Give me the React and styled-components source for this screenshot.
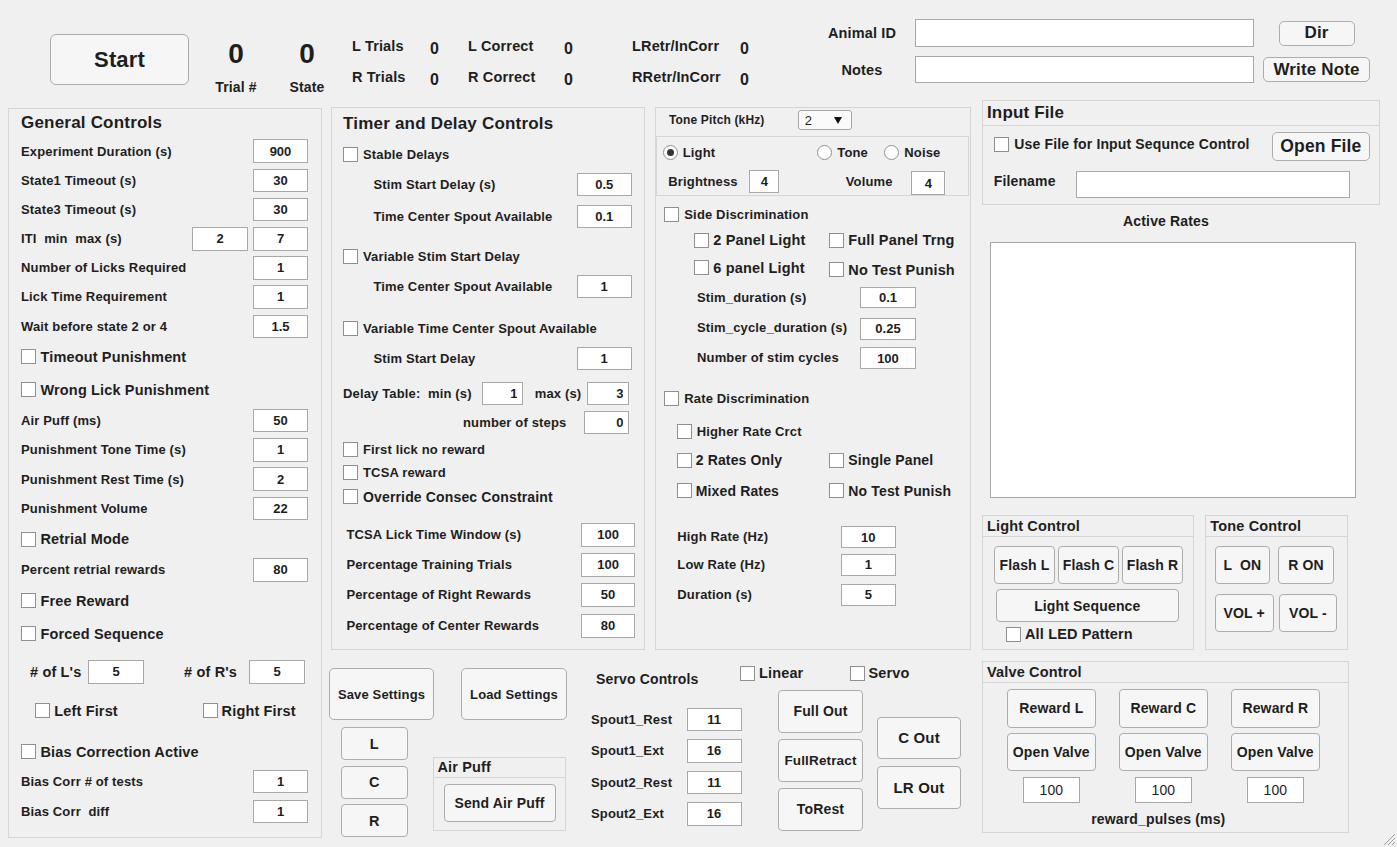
import React from 'react';
import styled, { createGlobalStyle } from 'styled-components';

const px = v => (typeof v === 'number' ? `${v}px` : v);

const GlobalStyle = createGlobalStyle`
  html, body { margin: 0; padding: 0; background: #f0f0f0; }
  body { font-family: "Liberation Sans", Arial, sans-serif; color: #1e1e1e; }
  * { box-sizing: border-box; }
`;

const Window = styled.div`
  position: relative;
  width: 1397px;
  height: 847px;
  overflow: hidden;
  background: #f0f0f0;
  font-weight: bold;
  letter-spacing: 0.15px;
`;

/* ---------- shared widgets ---------- */

const Btn = styled.button`
  flex: none;
  width: ${p => px(p.$w)};
  height: ${p => px(p.$h)};
  margin: ${p => px(p.$mt ?? 0)} 0 0 ${p => px(p.$ml ?? 0)};
  padding: 0;
  background: #f6f6f6;
  border: 1px solid #adadad;
  border-radius: ${p => px(p.$r ?? 4)};
  font-family: inherit;
  font-weight: bold;
  font-size: ${p => px(p.$fs ?? 14)};
  letter-spacing: 0.15px;
  color: #1e1e1e;
  white-space: pre;
  cursor: pointer;
`;

const Field = styled.input.attrs({ readOnly: true, type: 'text' })`
  flex: none;
  width: ${p => px(p.$w ?? 55)};
  height: ${p => px(p.$h ?? 23.5)};
  margin: ${p => px(p.$mt ?? 0)} ${p => px(p.$mr ?? 0)} 0 ${p => px(p.$ml ?? 0)};
  padding: 0 ${p => (p.$right ? '5px' : '0')};
  border: 1px solid #a8a8a8;
  background: #fff;
  font-family: inherit;
  font-weight: ${p => (p.$thin ? 'normal' : 'bold')};
  font-size: ${p => px(p.$fs ?? 13)};
  text-align: ${p => (p.$right ? 'right' : 'center')};
  color: #1e1e1e;
  outline: none;
`;

/* a line of a form: 20px tall, its distance to the line above set by $mt */
const Row = styled.div`
  display: flex;
  align-items: center;
  flex: none;
  height: ${p => px(p.$h ?? 20)};
  margin-top: ${p => px(p.$mt ?? 0)};
  padding-left: ${p => px(p.$pl ?? 0)};
  font-size: ${p => px(p.$fs ?? 13)};
`;

const Text = styled.span`
  flex: none;
  width: ${p => (p.$w ? px(p.$w) : 'auto')};
  margin-left: ${p => px(p.$ml ?? 0)};
  padding-bottom: ${p => px(p.$pb ?? 0)};
  font-size: ${p => (p.$fs ? px(p.$fs) : 'inherit')};
  white-space: pre;
`;

const CheckItem = styled.span`
  display: inline-flex;
  align-items: center;
  flex: none;
  width: ${p => (p.$w ? px(p.$w) : 'auto')};
  margin-top: ${p => px(p.$dy ?? 0)};
  font-size: ${p => (p.$fs ? px(p.$fs) : 'inherit')};
  white-space: pre;
`;

const Box = styled.span`
  flex: none;
  width: 15px;
  height: 15px;
  margin-right: ${p => px(p.$gap ?? 5)};
  border: 1px solid #8f8f8f;
  background: #fff;
`;

const RadioDot = styled.span`
  flex: none;
  width: 15px;
  height: 15px;
  margin-right: 5px;
  border-radius: 50%;
  border: 1px solid #8f8f8f;
  background: #fff;
  display: inline-flex;
  align-items: center;
  justify-content: center;
  &::after {
    content: '';
    width: 7px;
    height: 7px;
    border-radius: 50%;
    background: ${p => (p.$on ? '#333' : 'transparent')};
  }
`;

function Check({ label, fs, w, gap, dy }) {
  return (
    <CheckItem $fs={fs} $w={w} $dy={dy}>
      <Box $gap={gap} />
      {label}
    </CheckItem>
  );
}

function Radio({ label, on, w }) {
  return (
    <CheckItem $w={w}>
      <RadioDot $on={on} />
      {label}
    </CheckItem>
  );
}

const Panel = styled.div`
  flex: none;
  display: flex;
  flex-direction: column;
  width: ${p => px(p.$w)};
  height: ${p => px(p.$h)};
  margin: ${p => px(p.$mt ?? 0)} 0 0 ${p => px(p.$ml ?? 0)};
  padding: 0 ${p => px(p.$pr ?? 0)} 0 ${p => px(p.$pl ?? 0)};
  border: 1px solid #d5d5d5;
`;

const PanelHead = styled.div`
  flex: none;
  display: flex;
  align-items: center;
  height: ${p => px(p.$h)};
  padding-left: 4px;
  border-bottom: 1px solid #d5d5d5;
  font-size: ${p => px(p.$fs ?? 14.5)};
`;

const PanelTitle = styled.div`
  flex: none;
  display: flex;
  align-items: center;
  height: ${p => px(p.$h)};
  font-size: 17px;
  letter-spacing: 0.2px;
`;

/* ---------- top bar ---------- */

const TopBar = styled.div`
  display: flex;
  align-items: flex-start;
  height: 99px;
`;

const StartButton = styled(Btn)`
  margin: 34px 0 0 50px;
  width: 139px;
  height: 51px;
  border-radius: 6px;
  font-size: 22px;
`;

const Counter = styled.div`
  flex: none;
  width: 48px;
  margin: 39px 0 0 ${p => px(p.$ml)};
  display: flex;
  flex-direction: column;
  align-items: center;
`;

const BigNum = styled.div`
  font-size: 28px;
  line-height: 30px;
`;

const Caption = styled.div`
  margin-top: 10px;
  font-size: 14px;
  line-height: 16px;
`;

const Stats = styled.div`
  flex: none;
  display: grid;
  grid-template-columns: 78px 38px 96px 68px 108px 20px;
  grid-template-rows: 30px 30px;
  row-gap: 1px;
  align-items: center;
  margin: 32px 0 0 21px;
`;

const StatLabel = styled.div`
  font-size: 14.5px;
  padding-bottom: 2px;
`;

const StatValue = styled.div`
  font-size: 16px;
  padding-top: 4px;
`;

const IdForm = styled.div`
  flex: none;
  display: grid;
  grid-template-columns: 88px 339px 125px;
  grid-template-rows: 28px 27px;
  row-gap: 9px;
  align-items: center;
  justify-items: center;
  margin: 19px 0 0 67px;
  & > input { justify-self: start; }
`;

const IdLabel = styled.div`
  justify-self: start;
  width: 70px;
  text-align: center;
  font-size: 14.5px;
`;

/* ---------- main area ---------- */

const Main = styled.div`
  display: flex;
  align-items: flex-start;
`;

const CenterBlock = styled.div`
  flex: none;
  width: 640px;
  margin: 8px 0 0 9px;
`;

const PanelsRow = styled.div`
  display: flex;
  gap: 10px;
`;

const SubPanel = styled.div`
  flex: none;
  height: 60px;
  margin: 3.8px 1px 0 0;
  border: 1px solid #d5d5d5;
  display: flex;
  flex-direction: column;
`;

const RowList = styled.div`
  display: flex;
  flex-direction: column;
  padding-top: ${p => px(p.$pt ?? 0)};
`;

const SelectBox = styled.div`
  flex: none;
  width: 54px;
  height: 20px;
  display: flex;
  align-items: center;
  justify-content: space-between;
  padding: 0 9px 0 6px;
  border: 1px solid #a5a5a5;
  border-radius: 3px;
  background: #fafafa;
  font-size: 13px;
  font-weight: normal;
`;

const Caret = styled.span`
  width: 0;
  height: 0;
  border-left: 4px solid transparent;
  border-right: 4px solid transparent;
  border-top: 7px solid #111;
`;

/* bottom area */

const BottomArea = styled.div`
  display: flex;
  margin-left: -2px;
  height: 197px;
`;

const SettingsCol = styled.div`
  flex: none;
  margin-top: 18px;
`;

const SettingsTop = styled.div`
  display: flex;
  gap: 27px;
`;

const SettingsLower = styled.div`
  display: flex;
  align-items: flex-start;
  margin-top: 7px;
`;

const Stack = styled.div`
  flex: none;
  display: flex;
  flex-direction: column;
  gap: ${p => px(p.$gap)};
  margin: ${p => px(p.$mt ?? 0)} 0 0 ${p => px(p.$ml ?? 0)};
`;

const PanelBody = styled.div`
  display: flex;
  flex-wrap: wrap;
  align-items: flex-start;
  gap: ${p => px(p.$gap ?? 0)};
  padding: ${p => px(p.$pt ?? 0)} 0 0 ${p => px(p.$pl ?? 0)};
`;

const ServoSpouts = styled.div`
  flex: none;
  width: 149px;
  margin: 19.3px 0 0 24px;
`;

const ServoBlock = styled.div`
  flex: none;
  margin-top: 14px;
`;

const ServoButtons = styled.div`
  display: flex;
  align-items: flex-start;
  margin-top: 8px;
  padding-left: 38px;
`;

/* right column */

const RightColumn = styled.div`
  flex: none;
  width: 398px;
  margin: 1px 0 0 11px;
`;

const ActiveTitle = styled.div`
  width: 368px;
  height: 32.8px;
  display: flex;
  align-items: center;
  justify-content: center;
  font-size: 14px;
`;

const RateList = styled.div`
  width: 365.4px;
  height: 256.4px;
  margin: 4px 0 0 8.3px;
  border: 1px solid #a8a8a8;
  background: #fff;
`;

const ControlRow = styled.div`
  display: flex;
  gap: 11px;
  margin-top: 16.8px;
`;

const BtnRow = styled.div`
  display: flex;
  gap: ${p => px(p.$gap)};
  margin: ${p => px(p.$mt ?? 0)} 0 0 ${p => px(p.$ml ?? 0)};
`;

const ValveCols = styled.div`
  display: flex;
  gap: 22px;
  padding: 6.6px 0 0 23.3px;
`;

const ValveCol = styled.div`
  flex: none;
  width: 90px;
  display: flex;
  flex-direction: column;
  align-items: center;
`;

const ValveCaption = styled.div`
  margin-top: 6px;
  padding-right: 14px;
  height: 20px;
  line-height: 20px;
  text-align: center;
  font-size: 14px;
`;

const Grip = styled.svg`
  position: absolute;
  right: 1px;
  bottom: 1px;
`;

/* ---------- data ---------- */

const generalRows = [
  { mt: 4.5, label: 'Experiment Duration (s)', value: '900' },
  { mt: 9.5, label: 'State1 Timeout (s)', value: '30' },
  { mt: 8.8, label: 'State3 Timeout (s)', value: '30' },
  { mt: 9.5, label: 'ITI  min  max (s)', value: '7', extra: '2' },
  { mt: 9, label: 'Number of Licks Required', value: '1' },
  { mt: 9, label: 'Lick Time Requirement', value: '1' },
  { mt: 9.9, label: 'Wait before state 2 or 4', value: '1.5' },
  { mt: 10.3, check: 'Timeout Punishment' },
  { mt: 12.7, check: 'Wrong Lick Punishment' },
  { mt: 11, label: 'Air Puff (ms)', value: '50' },
  { mt: 9.1, label: 'Punishment Tone Time (s)', value: '1' },
  { mt: 9.4, label: 'Punishment Rest Time (s)', value: '2' },
  { mt: 9.1, label: 'Punishment Volume', value: '22' },
  { mt: 11, check: 'Retrial Mode' },
  { mt: 10.5, label: 'Percent retrial rewards', value: '80' },
  { mt: 11.2, check: 'Free Reward' },
  { mt: 13, check: 'Forced Sequence' },
];

const tailRows = [
  { mt: 21, check: 'Bias Correction Active' },
  { mt: 10.1, label: 'Bias Corr # of tests', value: '1' },
  { mt: 9.9, label: 'Bias Corr  diff', value: '1' },
];

function GeneralRow({ row }) {
  if (row.check) {
    return (
      <Row $mt={row.mt}>
        <Check label={row.check} fs={14.5} gap={4.5} />
      </Row>
    );
  }
  return (
    <Row $mt={row.mt}>
      <Text>{row.label}</Text>
      {row.extra ? (
        <>
          <Field $ml="auto" $w={55.6} value={row.extra} />
          <Field $ml={5} value={row.value} />
        </>
      ) : (
        <Field $ml="auto" value={row.value} />
      )}
    </Row>
  );
}

const spouts = [
  ['Spout1_Rest', '11'],
  ['Spout1_Ext', '16'],
  ['Spout2_Rest', '11'],
  ['Spout2_Ext', '16'],
];

const valves = ['L', 'C', 'R'];

export default function App() {
  return (
    <>
      <GlobalStyle />
      <Window>
        <TopBar>
          <StartButton>Start</StartButton>
          <Counter $ml={23}>
            <BigNum>0</BigNum>
            <Caption>Trial #</Caption>
          </Counter>
          <Counter $ml={23}>
            <BigNum>0</BigNum>
            <Caption>State</Caption>
          </Counter>
          <Stats>
            <StatLabel>L Trials</StatLabel>
            <StatValue>0</StatValue>
            <StatLabel>L Correct</StatLabel>
            <StatValue>0</StatValue>
            <StatLabel>LRetr/InCorr</StatLabel>
            <StatValue>0</StatValue>
            <StatLabel>R Trials</StatLabel>
            <StatValue>0</StatValue>
            <StatLabel>R Correct</StatLabel>
            <StatValue>0</StatValue>
            <StatLabel>RRetr/InCorr</StatLabel>
            <StatValue>0</StatValue>
          </Stats>
          <IdForm>
            <IdLabel>Animal ID</IdLabel>
            <Field $w={339} $h={28} value="" />
            <Btn $w={76} $h={25} $fs={17} $r={5}>Dir</Btn>
            <IdLabel>Notes</IdLabel>
            <Field $w={339} $h={27} value="" />
            <Btn $w={107} $h={25} $fs={17} $r={5}>Write Note</Btn>
          </IdForm>
        </TopBar>

        <Main>
          {/* General Controls */}
          <Panel $w={314} $h={730} $mt={9} $ml={8} $pl={12} $pr={13}>
            <PanelTitle $h={27.5}>General Controls</PanelTitle>
            {generalRows.map((r, i) => (
              <GeneralRow key={i} row={r} />
            ))}
            <Row $mt={18} $pl={9} $fs={14.5}>
              <Text>{"# of L's"}</Text>
              <Field $ml={7} $w={55.7} value="5" />
              <Text $ml={40}>{"# of R's"}</Text>
              <Field $ml={12} $w={56} value="5" />
            </Row>
            <Row $mt={18.7} $pl={14.3} $fs={14.5}>
              <Check label="Left First" w={167.3} gap={4} />
              <Check label="Right First" gap={4} />
            </Row>
            {tailRows.map((r, i) => (
              <GeneralRow key={i} row={r} />
            ))}
          </Panel>

          <CenterBlock>
            <PanelsRow>
              {/* Timer and Delay Controls */}
              <Panel $w={314} $h={543} $pl={11} $pr={12.3}>
                <PanelTitle $h={32}>Timer and Delay Controls</PanelTitle>
                <Row $mt={4.4}>
                  <Check label="Stable Delays" />
                </Row>
                <Row $mt={10} $pl={30.4}>
                  <Text>Stim Start Delay (s)</Text>
                  <Field $ml="auto" $h={23} value="0.5" />
                </Row>
                <Row $mt={12} $pl={30.4}>
                  <Text>Time Center Spout Available</Text>
                  <Field $ml="auto" $h={23} value="0.1" />
                </Row>
                <Row $mt={20.3}>
                  <Check label="Variable Stim Start Delay" />
                </Row>
                <Row $mt={10.3} $pl={30.4}>
                  <Text>Time Center Spout Available</Text>
                  <Field $ml="auto" $h={23} value="1" />
                </Row>
                <Row $mt={21.3}>
                  <Check label="Variable Time Center Spout Available" />
                </Row>
                <Row $mt={10} $pl={30.4}>
                  <Text>Stim Start Delay</Text>
                  <Field $ml="auto" $h={23} value="1" />
                </Row>
                <Row $mt={15.1}>
                  <Text $w={139}>{'Delay Table:  min (s)'}</Text>
                  <Field $w={41.4} $h={23} $right value="1" />
                  <Text $ml={11.3} $w={52.7}>max (s)</Text>
                  <Field $w={42} $h={23} $right value="3" />
                </Row>
                <Row $mt={9.3} $pl={120}>
                  <Text $w={121}>number of steps</Text>
                  <Field $w={45.4} $h={23} $right value="0" />
                </Row>
                <Row $mt={6.8}>
                  <Check label="First lick no reward" />
                </Row>
                <Row $mt={3.4}>
                  <Check label="TCSA reward" />
                </Row>
                <Row $mt={3.8} $fs={14}>
                  <Check label="Override Consec Constraint" />
                </Row>
                <Row $mt={17.9} $pl={3.4}>
                  <Text>TCSA Lick Time Window (s)</Text>
                  <Field $ml="auto" $mr={-3.7} $w={54.7} $h={24} value="100" />
                </Row>
                <Row $mt={10.3} $pl={3.4}>
                  <Text>Percentage Training Trials</Text>
                  <Field $ml="auto" $mr={-3.7} $w={54.7} $h={24} value="100" />
                </Row>
                <Row $mt={9.9} $pl={3.4}>
                  <Text>Percentage of Right Rewards</Text>
                  <Field $ml="auto" $mr={-3.7} $w={54.7} $h={24} value="50" />
                </Row>
                <Row $mt={11} $pl={3.4}>
                  <Text>Percentage of Center Rewards</Text>
                  <Field $ml="auto" $mr={-3.7} $w={54.7} $h={24} value="80" />
                </Row>
              </Panel>

              {/* Stimulus panel */}
              <Panel $w={316} $h={543}>
                <Row $h={24} $pl={13} $fs={12}>
                  <Text $w={128.7}>Tone Pitch (kHz)</Text>
                  <SelectBox>
                    2<Caret />
                  </SelectBox>
                </Row>
                <SubPanel>
                  <Row $h={31} $pl={5.7}>
                    <Radio label="Light" on w={154.6} />
                    <Radio label="Tone" w={67} />
                    <Radio label="Noise" />
                  </Row>
                  <Row $h={27} $pl={11.3}>
                    <Text $w={81}>Brightness</Text>
                    <Field $w={30} $h={23} value="4" />
                    <Text $ml={66.4} $w={65.6}>Volume</Text>
                    <Field $w={34} $h={23.8} $mt={4} value="4" />
                  </Row>
                </SubPanel>
                <RowList>
                  <Row $mt={8.5} $pl={8.3}>
                    <Check label="Side Discrimination" />
                  </Row>
                  <Row $mt={6.2} $pl={38.3} $fs={14.5}>
                    <Check label="2 Panel Light" w={135} gap={4} />
                    <Check label="Full Panel Trng" gap={4} />
                  </Row>
                  <Row $mt={8.5} $pl={38.3} $fs={14.5}>
                    <Check label="6 panel Light" w={135} gap={4} dy={-2} />
                    <Check label="No Test Punish" gap={4} dy={2} />
                  </Row>
                  <Row $mt={9} $pl={41}>
                    <Text $w={163.3}>Stim_duration (s)</Text>
                    <Field $w={55.4} $h={21} value="0.1" />
                  </Row>
                  <Row $mt={10} $pl={41}>
                    <Text $w={163.3}>Stim_cycle_duration (s)</Text>
                    <Field $w={55.4} $h={21.3} $mt={2} value="0.25" />
                  </Row>
                  <Row $mt={9.5} $pl={41}>
                    <Text $w={163.3}>Number of stim cycles</Text>
                    <Field $w={55.4} $h={22} $mt={2} value="100" />
                  </Row>
                  <Row $mt={21.4} $pl={8.3}>
                    <Check label="Rate Discrimination" />
                  </Row>
                  <Row $mt={13.1} $pl={20.7}>
                    <Check label="Higher Rate Crct" />
                  </Row>
                  <Row $mt={8.2} $pl={20.7} $fs={14}>
                    <Check label="2 Rates Only" w={152.6} gap={4} />
                    <Check label="Single Panel" gap={4} />
                  </Row>
                  <Row $mt={10.6} $pl={20.7} $fs={14}>
                    <Check label="Mixed Rates" w={152.6} gap={4} />
                    <Check label="No Test Punish" gap={4} />
                  </Row>
                  <Row $mt={25.7} $pl={21.3}>
                    <Text $w={163.4}>High Rate (Hz)</Text>
                    <Field $w={55.3} $h={22} $mt={2} value="10" />
                  </Row>
                  <Row $mt={8.5} $pl={21.3}>
                    <Text $w={163.4}>Low Rate (Hz)</Text>
                    <Field $w={55.3} $h={22} value="1" />
                  </Row>
                  <Row $mt={9.3} $pl={21.3}>
                    <Text $w={163.4}>Duration (s)</Text>
                    <Field $w={55.3} $h={22} $mt={1} value="5" />
                  </Row>
                </RowList>
              </Panel>
            </PanelsRow>

            <BottomArea>
              <SettingsCol>
                <SettingsTop>
                  <Btn $w={105} $h={52} $fs={13} $r={5}>Save Settings</Btn>
                  <Btn $w={106} $h={52} $fs={13} $r={5}>Load Settings</Btn>
                </SettingsTop>
                <SettingsLower>
                  <Stack $gap={5.5} $ml={12}>
                    <Btn $w={66.5} $h={33} $fs={14.5}>L</Btn>
                    <Btn $w={66.5} $h={33} $fs={14.5}>C</Btn>
                    <Btn $w={66.5} $h={33} $fs={14.5}>R</Btn>
                  </Stack>
                  <Panel $w={133} $h={74} $mt={29.7} $ml={25}>
                    <PanelHead $h={20.6} $fs={14.5}>Air Puff</PanelHead>
                    <PanelBody $pt={5.6} $pl={10}>
                      <Btn $w={112} $h={38.4} $fs={14}>Send Air Puff</Btn>
                    </PanelBody>
                  </Panel>
                </SettingsLower>
              </SettingsCol>

              <ServoSpouts>
                <Row $pl={5} $fs={14}>
                  <Text>Servo Controls</Text>
                </Row>
                <RowList $pt={14.35}>
                  {spouts.map(([name, val]) => (
                    <Row key={name} $h={31.5} $fs={13}>
                      <Text $w={95.5}>{name}</Text>
                      <Field $w={55} $h={23.5} value={val} />
                    </Row>
                  ))}
                </RowList>
              </ServoSpouts>

              <ServoBlock>
                <Row $h={18} $fs={14.5}>
                  <Check label="Linear" w={109.5} gap={4} />
                  <Check label="Servo" gap={4} />
                </Row>
                <ServoButtons>
                  <Stack $gap={6.5}>
                    <Btn $w={85} $h={42.5} $fs={14}>Full Out</Btn>
                    <Btn $w={85} $h={42.5} $fs={13.5}>FullRetract</Btn>
                    <Btn $w={85} $h={42.5} $fs={14}>ToRest</Btn>
                  </Stack>
                  <Stack $gap={7} $ml={14} $mt={26.7}>
                    <Btn $w={84} $h={42.5} $fs={15}>C Out</Btn>
                    <Btn $w={84} $h={42.5} $fs={15}>LR Out</Btn>
                  </Stack>
                </ServoButtons>
              </ServoBlock>
            </BottomArea>
          </CenterBlock>

          <RightColumn>
            <Panel $w={398} $h={105}>
              <PanelHead $h={24.7} $fs={17}>Input File</PanelHead>
              <RowList>
                <Row $h={37} $pl={11.3} $fs={14}>
                  <Check label="Use File for Input Sequnce Control" gap={5} />
                  <Btn $w={98.3} $h={28.5} $fs={17.5} $r={5} $ml="auto" $mt={5}>
                    Open File
                  </Btn>
                  <Text $w={9} />
                </Row>
                <Row $h={36} $pl={10.7} $fs={14}>
                  <Text $w={82.3}>Filename</Text>
                  <Field $w={274} $h={27} $mt={7} value="" />
                </Row>
              </RowList>
            </Panel>

            <ActiveTitle>Active Rates</ActiveTitle>
            <RateList />

            <ControlRow>
              <Panel $w={212.3} $h={135}>
                <PanelHead $h={21.5}>Light Control</PanelHead>
                <BtnRow $gap={3} $ml={11} $mt={8.9}>
                  <Btn $w={61} $h={37.6}>Flash L</Btn>
                  <Btn $w={61} $h={37.6}>Flash C</Btn>
                  <Btn $w={61} $h={37.6}>Flash R</Btn>
                </BtnRow>
                <Btn $w={182.6} $h={32.7} $ml={13} $mt={5.3}>
                  Light Sequence
                </Btn>
                <Row $h={25} $pl={23} $fs={14.5}>
                  <Check label="All LED Pattern" gap={4} />
                </Row>
              </Panel>
              <Panel $w={142.7} $h={135}>
                <PanelHead $h={21.5}>Tone Control</PanelHead>
                <BtnRow $gap={8} $ml={8.3} $mt={8.9}>
                  <Btn $w={55.7} $h={37.6}>{'L  ON'}</Btn>
                  <Btn $w={55.4} $h={37.6}>R ON</Btn>
                </BtnRow>
                <BtnRow $gap={5} $ml={8.3} $mt={9.6}>
                  <Btn $w={59} $h={38.4}>VOL +</Btn>
                  <Btn $w={58.7} $h={38.4}>VOL -</Btn>
                </BtnRow>
              </Panel>
            </ControlRow>

            <Panel $w={366.6} $h={172.6} $mt={10.7}>
              <PanelHead $h={21}>Valve Control</PanelHead>
              <ValveCols>
                {valves.map(v => (
                  <ValveCol key={v}>
                    <Btn $w={89} $h={38.4}>{`Reward ${v}`}</Btn>
                    <Btn $w={89.6} $h={37.4} $mt={5.6}>Open Valve</Btn>
                    <Field $w={56.7} $h={26.6} $mt={6} $thin $fs={14} value="100" />
                  </ValveCol>
                ))}
              </ValveCols>
              <ValveCaption>reward_pulses (ms)</ValveCaption>
            </Panel>
          </RightColumn>
        </Main>

        <Grip width="16" height="16" viewBox="0 0 16 16">
          <path d="M15 4 L4 15 M15 8 L8 15 M15 12 L12 15" stroke="#a0a0a0" strokeWidth="1" />
        </Grip>
      </Window>
    </>
  );
}
